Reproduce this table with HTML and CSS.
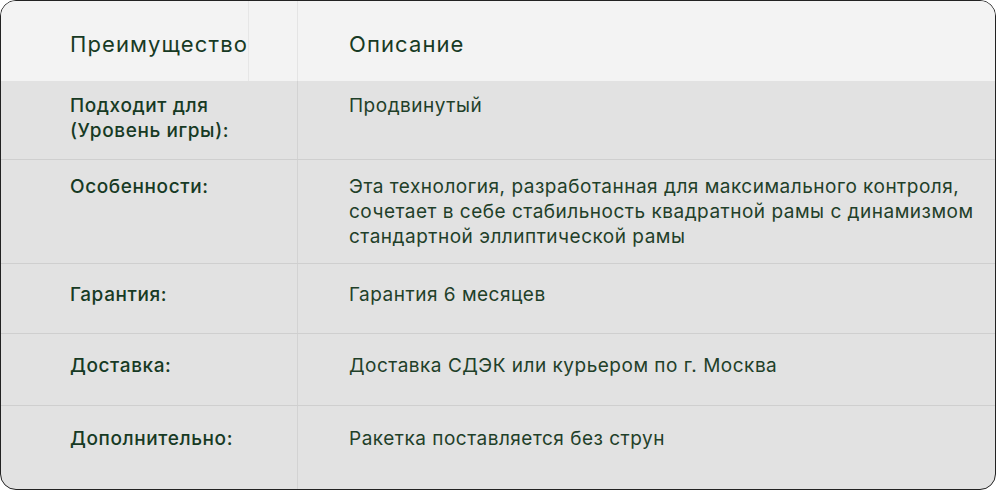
FILE: index.html
```
<!DOCTYPE html>
<html lang="ru">
<head>
<meta charset="utf-8">
<title>Характеристики</title>
<link rel="stylesheet" href="styles.css">
</head>
<body>
<div class="table">
  <div class="row head">
    <div class="cell key"><span class="head-label">Преимущество</span></div>
    <div class="cell val">Описание</div>
  </div>
  <div class="row r1">
    <div class="cell key">Подходит для<br>(Уровень игры):</div>
    <div class="cell val">Продвинутый</div>
  </div>
  <div class="row r2">
    <div class="cell key">Особенности:</div>
    <div class="cell val">Эта технология, разработанная для максимального контроля, сочетает в себе стабильность квадратной рамы с динамизмом стандартной эллиптической рамы</div>
  </div>
  <div class="row r3">
    <div class="cell key">Гарантия:</div>
    <div class="cell val">Гарантия 6 месяцев</div>
  </div>
  <div class="row r4">
    <div class="cell key">Доставка:</div>
    <div class="cell val">Доставка СДЭК или курьером по г. Москва</div>
  </div>
  <div class="row r5">
    <div class="cell key">Дополнительно:</div>
    <div class="cell val">Ракетка поставляется без струн</div>
  </div>
</div>
</body>
</html>
```
FILE: styles.css
```
* { box-sizing: border-box; }
html, body { margin: 0; padding: 0; background: #ffffff; }
body { width: 996px; height: 490px; font-family: Inter, "Noto Sans", sans-serif; color: #173a24; }

.table {
  width: 996px;
  height: 490px;
  border: 1px solid #222222;
  border-radius: 16px;
  overflow: hidden;
  background: #e2e2e2;
  display: flex;
  flex-direction: column;
}

.row {
  display: grid;
  grid-template-columns: 297px 1fr;
  border-top: 1px solid #cfcfcf;
}
.row.head { border-top: none; background: #f3f3f3; height: 80px; }
.row.r1 { border-top: none; height: 78px; }
.row.r2 { height: 104px; }
.row.r3 { height: 70px; }
.row.r4 { height: 72px; }
.row.r5 { flex: 1; }

.cell {
  font-size: 19px;
  line-height: 25px;
}
.cell.key {
  padding-left: 69px;
  font-weight: 500;
  letter-spacing: 0.6px;
  border-right: 1px solid #d3d3d3;
}
.cell.val {
  padding-left: 51px;
  padding-right: 14px;
  font-weight: 400;
  letter-spacing: 0.5px;
  color: #1f4029;
}

.head .cell { font-size: 22px; line-height: 28px; padding-top: 29px; font-weight: 400; letter-spacing: 1.1px; color: #173a24; }
.head .cell.key { border-right-color: #e4e4e4; padding-left: 0; }
.head-label {
  display: inline-block;
  height: 80px;
  margin-top: -29px;
  padding-top: 29px;
  padding-left: 69px;
  width: 248px;
  white-space: nowrap;
  border-right: 1px solid #e6e6e6;
}

.r1 .cell { padding-top: 12px; }
.r2 .cell { padding-top: 14px; }
.r3 .cell { padding-top: 18px; }
.r4 .cell { padding-top: 19px; }
.r5 .cell { padding-top: 20px; }
```
